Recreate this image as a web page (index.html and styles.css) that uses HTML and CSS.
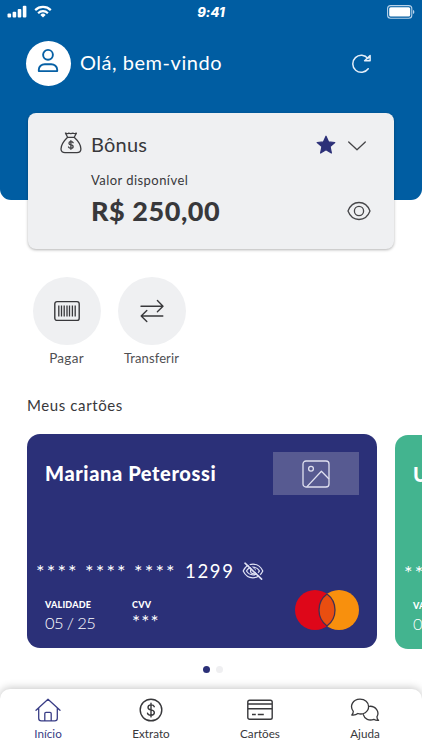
FILE: index.html
```html
<!DOCTYPE html>
<html lang="pt-BR">
<head>
<meta charset="utf-8">
<meta name="viewport" content="width=device-width, initial-scale=1">
<title>Início</title>
<link rel="stylesheet" href="styles.css">
</head>
<body>
<div class="app">
  <header class="header">
    <div class="status">
      <div class="status-left">
        <svg width="20" height="13" viewBox="0 0 20 13" fill="#fff"><rect x="0.5" y="8.6" width="3.6" height="4" rx="1"/><rect x="5.6" y="6.7" width="3.6" height="5.9" rx="1"/><rect x="10.7" y="4" width="3.6" height="8.6" rx="1"/><rect x="15.8" y="0.8" width="3.6" height="11.8" rx="1"/></svg>
        <svg width="18" height="13" viewBox="0 0 18 13" fill="none" stroke="#fff" stroke-width="2.2"><path d="M1.2 5.1a11.2 11.2 0 0 1 15.6 0"/><path d="M4.1 8.2a7 7 0 0 1 9.8 0"/><path d="M6.4 9.9a3.7 3.7 0 0 1 5.2 0L9 12.5z" fill="#fff" stroke="none"/></svg>
      </div>
      <span class="clock">9:41</span>
      <svg class="battery" width="28" height="14" viewBox="0 0 28 14"><rect x="0.6" y="0.6" width="24.2" height="12.6" rx="3" fill="none" stroke="#b9d3ea" stroke-width="1.1"/><rect x="2.2" y="2.2" width="21" height="9.4" rx="1.5" fill="#fff"/><path d="M26 4.8q1.4.7 1.4 2.1T26 9z" fill="#b9d3ea"/></svg>
    </div>
    <div class="greeting">
      <div class="avatar">
        <svg width="22" height="26" viewBox="0 0 22 26" fill="none" stroke="#0660a5" stroke-width="1.9" stroke-linejoin="round"><circle cx="11" cy="6.8" r="4.9"/><path d="M1.8 23.1v-1.4c0-3.2 2.8-5.4 6-5.4h6.4c3.2 0 6 2.2 6 5.4v1.4z"/></svg>
      </div>
      <span class="hello">Olá, bem-vindo</span>
      <svg class="refresh" width="22" height="22" viewBox="0 0 22 22" fill="none" stroke="#e5effa" stroke-width="1.5" stroke-linecap="round" stroke-linejoin="round"><path d="M17.2 15.7A8.5 8.5 0 1 1 17 5.6"/><path d="M19.1 2.6V7.8H13.6z"/></svg>
    </div>
  </header>

  <section class="bonus">
    <div class="bonus-head">
      <svg class="bag" width="22" height="22" viewBox="0 0 22 22" fill="none" stroke="#3d3d40" stroke-width="1.3" stroke-linecap="round" stroke-linejoin="round"><path d="M7.6 5.300 5.500 1.200q1.900.8 3 0 2.300.9 4.700 0 1.500.8 3.200 0L14.200 5.300zM7.600 5.300h6.600c3.800 3.500 6.700 7.700 6.700 11.800 0 2.400-1.700 3.600-4 3.600H5c-2.400 0-4-1.200-4-3.600C1 13 4 8.800 7.600 5.300z"/><path d="M13.100 10.700c-.5-.8-1.200-1-2.200-1-2.600 0-2.600 2.900 0 3.200 3 .3 2.900 3.300 0 3.300-1.200 0-2-.4-2.400-1.200M10.900 8.700v8.600"/></svg>
      <h1>Bônus</h1>
      <svg class="star" width="20" height="20" viewBox="0 0 20 20" fill="#2c3078" stroke="#2c3078" stroke-width="1.2" stroke-linejoin="round"><path d="M10 1.200 12.600 6.900 18.800 7.500 14.100 11.600 15.400 18 10 14.800 4.600 18 5.900 11.600 1.200 7.500 7.400 6.900z"/></svg>
      <svg class="chevron" width="20" height="12" viewBox="0 0 20 12" fill="none" stroke="#444447" stroke-width="1.3" stroke-linecap="round" stroke-linejoin="round"><path d="M1.700 2 10 9.800 18.300 2"/></svg>
    </div>
    <div class="bonus-label">Valor disponível</div>
    <div class="bonus-row">
      <strong>R$ 250,00</strong>
      <svg width="24" height="20" viewBox="0 0 24 20" fill="none" stroke="#464649" stroke-width="1.3"><path d="M1 10C3.200 4.200 7.200 1.500 12 1.500S20.800 4.200 23 10C20.800 15.800 16.800 18.500 12 18.500S3.200 15.800 1 10z" stroke-linejoin="round"/><circle cx="12" cy="10" r="4.600"/></svg>
    </div>
  </section>

  <nav class="actions">
    <div class="action">
      <div class="action-icon"><svg width="26" height="22" viewBox="0 0 26 22" fill="none" stroke="#38383b"><rect x=".8" y="1.600" width="24.400" height="18.800" rx="2.200" stroke-width="1.400"/><path d="M4.800 5.600v10.800M7.500 5.600v10.800M10.200 5.600v10.800M13 5.600v10.800M15.500 5.600v10.800M18.400 5.600v10.800M21.200 5.600v10.800" stroke-width="1.300"/></svg></div>
      <span class="pay">Pagar</span>
    </div>
    <div class="action">
      <div class="action-icon"><svg width="24" height="24" viewBox="0 0 24 24" fill="none" stroke="#38383b" stroke-width="1.400" stroke-linecap="round" stroke-linejoin="round"><path d="M1 7.200h21.800M17.400 1.600l5.600 5.600-5.600 5.600M22.800 17H1.200M6.800 11.400 1.200 17l5.600 5.600"/></svg></div>
      <span class="transfer">Transferir</span>
    </div>
  </nav>

  <h2>Meus cartões</h2>
  <section class="carousel">
    <article class="card card-blue">
      <div class="card-top">
        <h3>Mariana Peterossi</h3>
        <div class="brand"><svg width="28" height="28" viewBox="0 0 28 28" fill="none" stroke="#dfe0f0" stroke-width="1.3" stroke-linejoin="round"><rect x="1" y="1" width="26" height="26" rx="3"/><circle cx="9" cy="8.700" r="2.400"/><path d="M5 26.600 19.400 11.300 27 19"/></svg></div>
      </div>
      <div class="card-number">
        <span class="stars">****</span><span class="stars">****</span><span class="stars">****</span><span class="digits">1299</span>
        <svg width="22" height="20" viewBox="0 0 22 20" fill="none" stroke="#dfe1f3" stroke-width="1.2" stroke-linecap="round"><path d="M1.200 10C3.400 5.300 6.800 3.200 11 3.200s7.600 2.100 9.800 6.800C18.600 14.700 15.200 16.800 11 16.800S3.400 14.700 1.200 10z"/><path d="M4.500 10C6 7.400 8.200 6.200 11 6.200s5 1.200 6.500 3.800c-1.500 2.600-3.700 3.800-6.500 3.800S6 12.600 4.500 10z"/><circle cx="11" cy="10" r="2.500"/><path d="M4.500 1.500 20.500 17" stroke="#2b3078" stroke-width="1.4"/><path d="M3 2.200 19.600 18.200" stroke-width="1.600"/></svg>
      </div>
      <div class="card-bottom">
        <div class="field validity"><small>VALIDADE</small><span>05 / 25</span></div>
        <div class="field cvv"><small>CVV</small><span class="stars">***</span></div>
        <svg class="master" width="66" height="42" viewBox="0 0 66 42"><circle cx="21" cy="21" r="20" fill="#de0719"/><circle cx="45" cy="21" r="20" fill="#f8900d"/><path d="M33 5a20 20 0 0 1 0 32 20 20 0 0 1 0-32z" fill="#e94e10" stroke="#423052" stroke-width="1.300"/></svg>
      </div>
    </article>
    <article class="card card-green">
      <div class="card-top"><h3>U</h3></div>
      <div class="card-number"><span class="stars">****</span></div>
      <div class="card-bottom"><div class="field validity"><small>VALIDADE</small><span>05 / 25</span></div></div>
    </article>
  </section>
  <div class="dots"><i class="on"></i><i></i></div>

  <footer class="tabs">
    <div class="tab active tab-home">
      <svg width="26" height="24" viewBox="0 0 26 24" fill="none" stroke="currentColor" stroke-width="1.3" stroke-linecap="round" stroke-linejoin="round"><path d="M1 12.200 13 1.200 25 12.200M3.700 10v10.200q0 2.600 2.600 2.600h13.400q2.600 0 2.600-2.600V10M9.800 22.800v-7.300q0-1.200 1.200-1.200h4q1.200 0 1.200 1.200v7.300"/></svg>
      <span>Início</span>
    </div>
    <div class="tab tab-statement">
      <svg width="24" height="24" viewBox="0 0 24 24" fill="none" stroke="currentColor" stroke-width="1.4" stroke-linecap="round"><circle cx="12" cy="12" r="10.800"/><path d="M15.300 8.700c-.4-1.200-1.500-1.800-3.200-1.800-4 0-4.200 4.400-.1 5 4.500.7 4.400 5.300 0 5.300-1.900 0-3.200-.7-3.500-2.100M12 5.200v13.700"/></svg>
      <span>Extrato</span>
    </div>
    <div class="tab tab-cards">
      <svg width="26" height="24" viewBox="0 0 26 24" fill="none" stroke="currentColor" stroke-width="1.4"><rect x=".8" y="2.200" width="24.400" height="19" rx="1.800"/><path d="M1 6h24M1 10.800h24"/><path d="M5 16.500h3.800M10.800 16.500h6" stroke-width="1.300"/></svg>
      <span>Cartões</span>
    </div>
    <div class="tab tab-help">
      <svg width="30" height="24" viewBox="0 0 30 24" fill="none" stroke="currentColor" stroke-width="1.3" stroke-linecap="round" stroke-linejoin="round"><path d="M3.300 13.300C-.7 8.300 2.600 1.200 10 1.200c5 0 8.600 3.200 8.600 7.400 0 5.300-5.400 8.600-10.700 6.900-1.500 1.200-3.600 1.800-6.100 1.500 1-.9 1.500-2.200 1.500-3.700z"/><path d="M19.400 8.300c6.400-.5 10.500 5.600 7.500 10.500 0 1.500.6 2.700 1.700 3.600-2.200.2-3.600-.3-4.800-1.100-4.500 1.800-9.400-.3-10.500-4.600"/></svg>
      <span>Ajuda</span>
    </div>
  </footer>
</div>
</body>
</html>
```
FILE: styles.css
```css
* { box-sizing: border-box; }
body { margin: 0; background: #fff; color: #38383b; font-family: Lato, "Open Sans", sans-serif; }
svg { display: block; flex: none; }
h1, h2, h3 { margin: 0; }
.app { width: 422px; height: 750px; display: flex; flex-direction: column; overflow: hidden; }

.header { flex: none; height: 200px; background: #005da2; border-radius: 0 0 11px 11px; color: #fff; }
.status { display: grid; grid-template-columns: 1fr auto 1fr; height: 24px; padding: 0 7px 0 7px; align-items: center; }
.status-left { display: flex; gap: 7px; padding-bottom: 2px; }
.clock { font: italic 800 13px/22px Inter, sans-serif; letter-spacing: .1px; }
.battery { justify-self: end; padding-bottom: 0; }
.greeting { display: flex; align-items: center; margin: 17px 49px 0 26px; height: 45px; }
.avatar { width: 45px; height: 45px; border-radius: 50%; background: #fff; display: flex; justify-content: center; padding-top: 7px; }
.avatar svg { margin-right: 1px; }
.hello { margin-left: 9px; padding-bottom: 3px; font-size: 20px; line-height: 26px; letter-spacing: .53px; }
.refresh { margin-left: auto; }

.bonus { flex: none; height: 136px; margin: -87px 28px 0; padding: 18px 23px 0 32px; border-radius: 8px; background: #eff0f2; box-shadow: 0 1px 3px rgba(0,0,0,.3); }
.bonus-head { display: flex; align-items: center; height: 26px; }
.bag { margin-bottom: 2px; }
.bonus-head h1 { margin-left: 9px; font-size: 20px; font-weight: 400; line-height: 26px; letter-spacing: .2px; }
.star { margin-left: auto; margin-top: 1px; }
.chevron { margin: 3px 4px 0 11px; }
.bonus-label { margin: 14px 0 0 31px; font-size: 13px; line-height: 18px; letter-spacing: .45px; }
.bonus-row { display: flex; align-items: center; justify-content: space-between; margin-left: 31px; height: 44px; }
.bonus-row strong { font-size: 27px; font-weight: 900; line-height: 36px; letter-spacing: .55px; }

.actions { flex: none; display: flex; gap: 18px; margin: 28px 0 0 33px; }
.action { width: 67px; display: flex; flex-direction: column; align-items: center; font-size: 13px; line-height: 18px; color: #505053; }
.action-icon { width: 68px; height: 68px; border-radius: 50%; background: #eff0f2; display: grid; place-items: center; margin-bottom: 4px; }
.pay { font-size: 13.5px; letter-spacing: .3px; }
.transfer { letter-spacing: .1px; }
h2 { margin: 28px 0 0 27px; height: 21px; font-size: 15px; font-weight: 400; line-height: 20px; letter-spacing: .6px; }

.carousel { flex: none; display: flex; gap: 18px; height: 214px; margin: 18px 0 0 27px; }
.card { flex: none; width: 350px; height: 214px; border-radius: 13px; padding: 18px; color: #fff; }
.card-blue { background: #2b3078; }
.card-green { background: #43b48f; margin-top: 1px; }
.card-top { display: flex; justify-content: space-between; height: 43px; }
.card-top h3 { font-size: 20px; font-weight: 900; line-height: 43px; letter-spacing: .6px; }
.brand { width: 86px; height: 43px; background: #575a91; display: grid; place-items: center; }
.card-number { display: flex; align-items: center; height: 26px; margin: 63px 0 0 -9px; line-height: 26px; }
.stars { font-size: 20px; letter-spacing: 2.2px; height: 26px; }
.card-number .stars { width: 49px; }
.digits { font-size: 18.5px; letter-spacing: 1.7px; margin-left: 2px; }
.card-number svg { margin-left: 7px; }
.card-bottom { display: flex; margin-top: 5px; }
.field { display: flex; flex-direction: column; padding-top: 10px; }
.field small { font-size: 9px; font-weight: 900; line-height: 11px; letter-spacing: .2px; }
.field span { font-size: 16.5px; font-weight: 300; line-height: 26px; letter-spacing: -.6px; }
.field .stars { font-size: 19px; font-weight: 400; line-height: 24px; letter-spacing: 1.2px; }
.validity { width: 87px; }
.master { margin-left: auto; margin-right: -1px; }

.dots { flex: none; display: flex; gap: 6px; padding-left: 203px; margin-top: 18px; height: 7px; }
.dots i { width: 7px; height: 7px; border-radius: 50%; background: #efeff1; }
.dots .on { background: #2b3078; }

.tabs { flex: none; height: 61px; margin-top: 16px; padding: 9px 15px 0 6px; background: #fff; border-radius: 10px 10px 0 0; box-shadow: 0 -1px 9px rgba(0,0,0,.23); display: grid; grid-template-columns: 84px 122px 96px 114px; }
.tab { display: flex; flex-direction: column; align-items: center; font-size: 11.7px; line-height: 16px; gap: 3px; color: #38383b; }
.active { color: #393d86; }
```
